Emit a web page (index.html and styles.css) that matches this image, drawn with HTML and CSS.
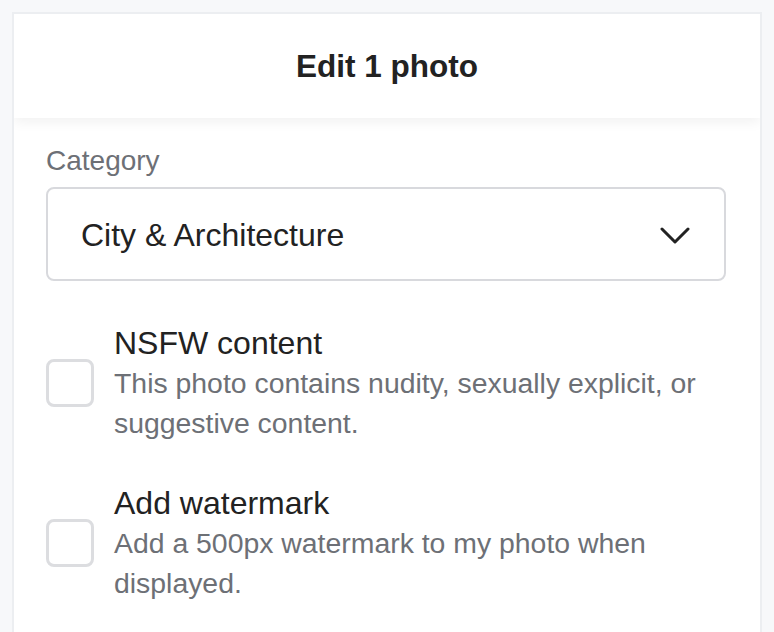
FILE: index.html
```html
<!DOCTYPE html>
<html lang="en">
<head>
<meta charset="utf-8">
<title>Edit 1 photo</title>
<link rel="stylesheet" href="styles.css">
</head>
<body>
<div class="card">
  <header class="card-header">
    <h1 class="title">Edit 1 photo</h1>
  </header>
  <div class="card-body">
    <div class="field">
      <label class="field-label">Category</label>
      <div class="select">
        <span class="select-value">City &amp; Architecture</span>
        <svg class="chevron" width="30" height="18" viewBox="0 0 30 18" aria-hidden="true">
          <path d="M2 2 L15 15 L28 2" fill="none" stroke="#222" stroke-width="3" stroke-linecap="round" stroke-linejoin="round"/>
        </svg>
      </div>
    </div>
    <div class="option">
      <span class="checkbox"></span>
      <div class="option-text">
        <div class="option-title">NSFW content</div>
        <div class="option-desc">This photo contains nudity, sexually explicit, or suggestive content.</div>
      </div>
    </div>
    <div class="option">
      <span class="checkbox"></span>
      <div class="option-text">
        <div class="option-title">Add watermark</div>
        <div class="option-desc">Add a 500px watermark to my photo when displayed.</div>
      </div>
    </div>
  </div>
</div>
</body>
</html>
```
FILE: styles.css
```css
html, body {
  margin: 0;
  padding: 0;
  background: #f7f8fa;
  font-family: "Liberation Sans", Arial, Helvetica, sans-serif;
  color: #222;
}
body {
  padding: 12px 12px 0 12px;
  height: 632px;
  box-sizing: border-box;
  overflow: hidden;
}
.card {
  background: #fff;
  border: 2px solid #eceef1;
  border-bottom: none;
  height: 620px;
  box-sizing: border-box;
  overflow: hidden;
}
.card-header {
  height: 104px;
  display: flex;
  align-items: center;
  justify-content: center;
  box-shadow: 0 4px 12px rgba(0, 0, 0, 0.06);
  position: relative;
}
.title {
  margin: 0;
  font-size: 31.5px;
  font-weight: 700;
  color: #222;
}
.card-body {
  padding: 23px 34px 0 32px;
}
.field-label {
  display: block;
  font-size: 28px;
  line-height: 40px;
  color: #6d7076;
  margin-bottom: 6px;
}
.select {
  height: 94px;
  box-sizing: border-box;
  border: 2px solid #d8d9dd;
  border-radius: 8px;
  display: flex;
  align-items: center;
  justify-content: space-between;
  padding: 2px 34px 0 33px;
}
.select-value {
  font-size: 32px;
  color: #222;
}
.chevron {
  display: block;
  margin-top: 2px;
}
.option {
  display: flex;
  align-items: center;
  gap: 20px;
  margin-top: 42px;
}
.option + .option {
  margin-top: 40px;
}
.checkbox {
  flex: none;
  width: 48px;
  height: 48px;
  box-sizing: border-box;
  border: 3px solid #dcdde0;
  border-radius: 8px;
  background: #fff;
}
.option-title {
  font-size: 32px;
  line-height: 40px;
  color: #222;
}
.option-desc {
  font-size: 28.4px;
  line-height: 40px;
  color: #6d7076;
}
```
